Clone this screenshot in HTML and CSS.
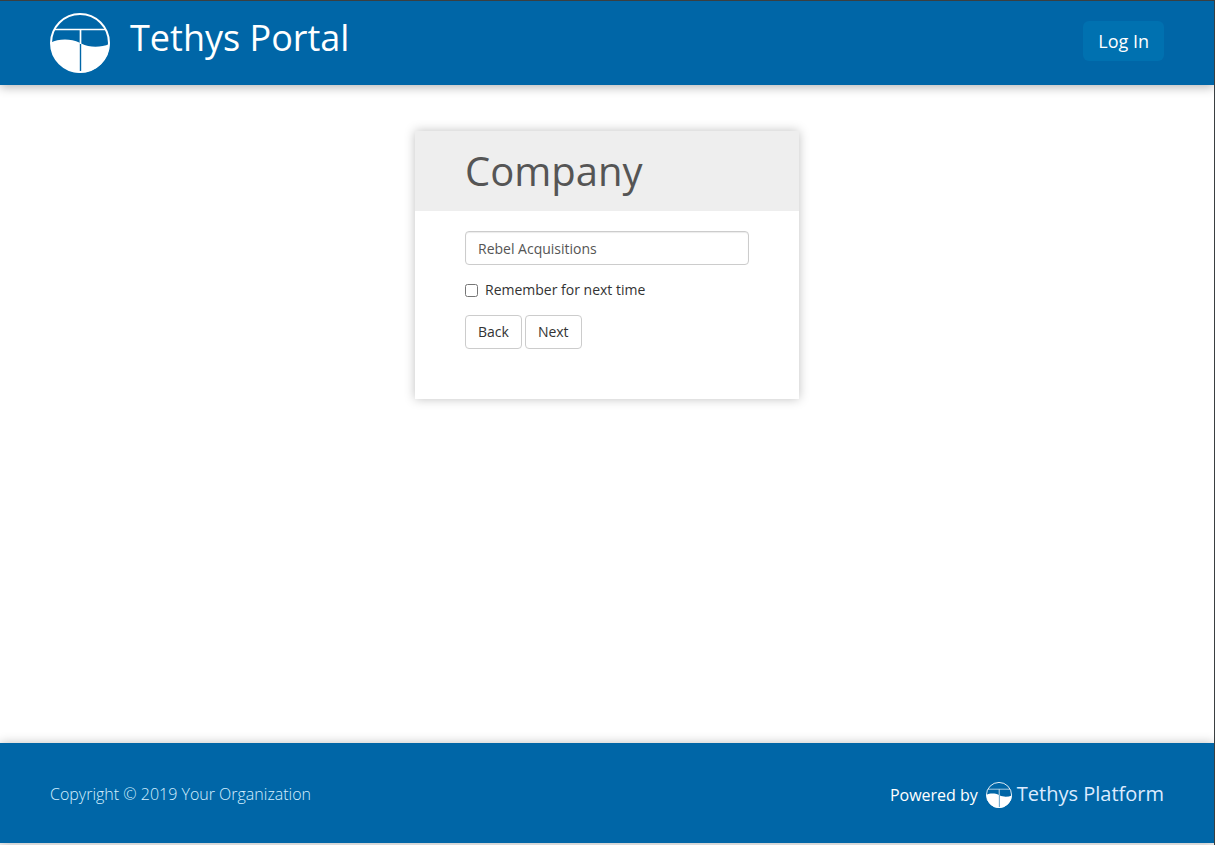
FILE: index.html
```html
<!DOCTYPE html>
<html lang="en">
<head>
<meta charset="utf-8">
<meta name="viewport" content="width=device-width, initial-scale=1">
<title>Tethys Portal</title>
<link rel="stylesheet" href="styles.css">
</head>
<body>
<svg class="symbols" aria-hidden="true">
  <symbol id="tethys-logo" viewBox="0 0 60 60">
    <circle cx="30" cy="30" r="29" fill="none" stroke="currentColor" stroke-width="2"/>
    <path d="M4.5 16.6H55.5" fill="none" stroke="currentColor" stroke-width="1.5"/>
    <path d="M30.5 17V31" fill="none" stroke="currentColor" stroke-width="1.7"/>
    <path d="M1 29.5C8 26 20 25 29.8 29.8V58.5H31.2V30.5C40 35 51 34.5 59.5 31A29.6 29.6 0 0 1 30 59.8A29.8 29.8 0 0 1 1 29.5Z" fill="currentColor"/>
  </symbol>
</svg>
<header class="site-header">
  <a class="brand" href="#">
    <svg class="brand-logo" aria-hidden="true"><use href="#tethys-logo"/></svg>
    <span class="brand-name">Tethys Portal</span>
  </a>
  <a class="login" href="#">Log In</a>
</header>
<main class="content">
  <form class="card">
    <div class="card-head"><h1 class="card-title"><label for="company">Company</label></h1></div>
    <div class="card-body">
      <input class="field" id="company" type="text" value="Rebel Acquisitions">
      <label class="remember"><input class="check" type="checkbox">Remember for next time</label>
      <div class="actions">
        <button class="btn" type="button">Back</button>
        <button class="btn" type="button">Next</button>
      </div>
    </div>
  </form>
</main>
<footer class="site-footer">
  <p class="copyright">Copyright © 2019 Your Organization</p>
  <p class="powered">Powered by
    <a class="platform" href="#"><svg class="platform-logo" aria-hidden="true"><use href="#tethys-logo"/></svg><span class="platform-name">Tethys Platform</span></a>
  </p>
</footer>
</body>
</html>
```
FILE: styles.css
```css
* {
  box-sizing: border-box;
}

html {
  background: #f2f2f2;
}

body {
  display: flex;
  flex-direction: column;
  min-height: 100vh;
  margin: 0;
  padding-bottom: 2px;
  border-top: 1px solid #3a3f41;
  border-right: 1px solid #3a3f41;
  color: #333;
  font: 14px/20px "Open Sans", "Noto Sans", sans-serif;
}

a {
  color: inherit;
  text-decoration: none;
}

.symbols {
  position: absolute;
  width: 0;
  height: 0;
}

.site-header {
  position: relative;
  display: flex;
  align-items: center;
  justify-content: space-between;
  height: 84px;
  padding: 0 50px;
  background: #0066a7;
  color: #fff;
  box-shadow: 0 2px 10px rgba(0, 0, 0, 0.3);
}

.brand {
  display: flex;
  align-items: center;
  gap: 20px;
}

.brand-logo {
  width: 60px;
  height: 60px;
}

.brand-name {
  padding-bottom: 10px;
  font-size: 36px;
  line-height: 50px;
}

.login {
  padding: 8px 15px;
  border-radius: 6px;
  background: #0071b0;
  font-size: 18px;
  line-height: 24px;
  margin-bottom: 4px;
}

.content {
  flex: 1;
  padding: 46px 20px;
  background: #fff;
}

.card {
  max-width: 384px;
  margin: 0 auto;
  background: #fff;
  box-shadow: 0 0 10px rgba(0, 0, 0, 0.25);
}

.card-head {
  padding: 15px 50px;
  background: #eee;
}

.card-title {
  margin: 0;
  color: #555;
  font-size: 40px;
  font-weight: 400;
  line-height: 50px;
}

.card-body {
  padding: 20px 50px 50px;
}

.field {
  display: block;
  width: 100%;
  height: 34px;
  padding: 6px 12px;
  border: 1px solid #ccc;
  border-radius: 4px;
  background: #fff;
  box-shadow: inset 0 1px 1px rgba(0, 0, 0, 0.08);
  color: #555;
  font: inherit;
}

.remember {
  display: flex;
  align-items: center;
  gap: 7px;
  margin: 15px 0;
}

.check {
  width: 13px;
  height: 13px;
  margin: 1px 0 0;
}

.actions {
  display: flex;
  gap: 3px;
}

.btn {
  padding: 6px 12px;
  border: 1px solid #ccc;
  border-radius: 4px;
  background: #fff;
  color: #333;
  font: inherit;
}

.site-footer {
  position: relative;
  display: flex;
  align-items: center;
  justify-content: space-between;
  min-height: 100px;
  padding: 0 50px;
  background: #0066a7;
  color: #fff;
  font-size: 16px;
  box-shadow: 0 0 10px rgba(0, 0, 0, 0.25);
}

.copyright {
  margin: 2px 0 0;
  color: #d5f0ff;
  font-weight: 300;
}

.powered {
  display: flex;
  align-items: center;
  gap: 8px;
  margin: 4px 0 0;
}

.platform {
  display: flex;
  align-items: center;
  gap: 5px;
  color: #dcebff;
  font-size: 20px;
}

.platform-logo {
  width: 26px;
  height: 26px;
  color: #fff;
}

.platform-name {
  padding-bottom: 2px;
}
```
